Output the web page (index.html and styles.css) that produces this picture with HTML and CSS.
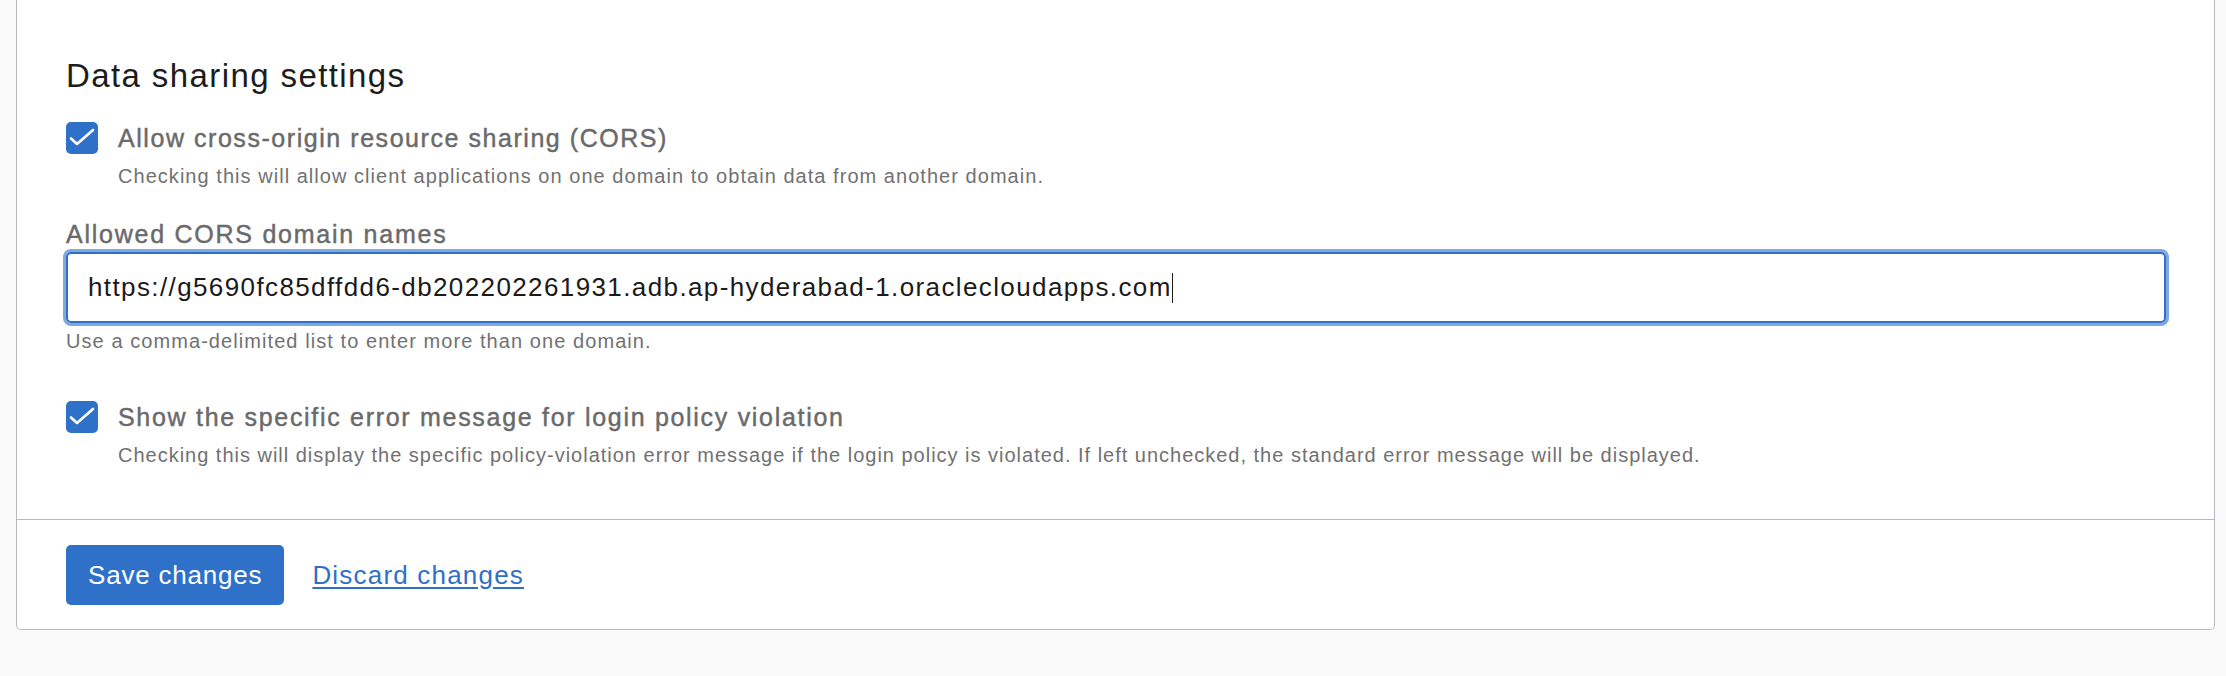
FILE: index.html
```html
<!DOCTYPE html>
<html lang="en">
<head>
<meta charset="utf-8">
<title>Data sharing settings</title>
<link rel="stylesheet" href="styles.css">
</head>
<body>
<div class="panel">
  <div class="panel-body">
    <h2 class="heading">Data sharing settings</h2>

    <div class="check-row">
      <span class="checkbox"><svg viewBox="0 0 32 32" width="32" height="32"><polyline points="5,16.5 11,22 27,8" fill="none" stroke="#fff" stroke-width="2.6" stroke-linecap="round" stroke-linejoin="round"/></svg></span>
      <span class="check-label">Allow cross-origin resource sharing (CORS)</span>
    </div>
    <div class="check-desc">Checking this will allow client applications on one domain to obtain data from another domain.</div>

    <div class="field-label">Allowed CORS domain names</div>
    <div class="input">https://g5690fc85dffdd6-db202202261931.adb.ap-hyderabad-1.oraclecloudapps.com<span class="caret"></span></div>
    <div class="help">Use a comma-delimited list to enter more than one domain.</div>

    <div class="check-row second">
      <span class="checkbox"><svg viewBox="0 0 32 32" width="32" height="32"><polyline points="5,16.5 11,22 27,8" fill="none" stroke="#fff" stroke-width="2.6" stroke-linecap="round" stroke-linejoin="round"/></svg></span>
      <span class="check-label wide">Show the specific error message for login policy violation</span>
    </div>
    <div class="check-desc tight">Checking this will display the specific policy-violation error message if the login policy is violated. If left unchecked, the standard error message will be displayed.</div>
  </div>
  <div class="panel-footer">
    <button class="btn-primary">Save changes</button>
    <a class="link" href="#">Discard changes</a>
  </div>
</div>
</body>
</html>
```

FILE: styles.css
```css
html, body {
  margin: 0;
  padding: 0;
  background: #fafafa;
  font-family: "Liberation Sans", Arial, sans-serif;
}

.panel {
  margin-left: 16px;
  width: 2197px;
  background: #ffffff;
  border: 1px solid #b7babe;
  border-top: none;
  border-radius: 0 0 5px 5px;
}

.panel-body {
  padding: 56px 48px 52px 49px;
}

.heading {
  margin: 0;
  font-size: 33px;
  line-height: 40px;
  font-weight: 400;
  color: #1d1c1a;
  letter-spacing: 1.4px;
}

.check-row {
  display: flex;
  align-items: center;
  height: 32px;
  margin-top: 26px;
}

.check-row.second {
  margin-top: 48px;
}

.checkbox {
  width: 32px;
  height: 32px;
  border-radius: 5px;
  background: #2f71c9;
  flex: none;
  display: flex;
}

.check-label {
  margin-left: 20px;
  font-size: 25px;
  line-height: 32px;
  color: #6a6a6a;
  -webkit-text-stroke: 0.45px #6a6a6a;
  letter-spacing: 1.55px;
}

.check-label.wide {
  letter-spacing: 1.7px;
}

.check-desc {
  margin-left: 52px;
  margin-top: 10px;
  font-size: 20px;
  line-height: 24px;
  color: #717171;
  letter-spacing: 1.04px;
}

.check-desc.tight {
  letter-spacing: 0.99px;
}

.field-label {
  margin-top: 31px;
  font-size: 25px;
  line-height: 30px;
  color: #6a6a6a;
  -webkit-text-stroke: 0.45px #6a6a6a;
  letter-spacing: 1.75px;
}

.input {
  margin-top: 3px;
  box-sizing: border-box;
  height: 71px;
  border: 2px solid #2f6fc7;
  border-radius: 5px;
  box-shadow: 0 0 0 3px #7fa7e0;
  padding: 0 20px;
  display: flex;
  align-items: center;
  font-size: 26px;
  color: #1b1a19;
  letter-spacing: 1.39px;
  white-space: nowrap;
}

.caret {
  display: inline-block;
  width: 1.5px;
  height: 30px;
  background: #1b1a19;
}

.help {
  margin-top: 6px;
  font-size: 20px;
  line-height: 24px;
  color: #717171;
  letter-spacing: 1.07px;
}

.panel-footer {
  border-top: 1px solid #b7babe;
  padding: 25px 49px 24px;
  display: flex;
  align-items: center;
  gap: 28px;
}

.btn-primary {
  height: 60px;
  padding: 0 22px;
  border: none;
  border-radius: 5px;
  background: #2f71c9;
  color: #ffffff;
  font-family: "Liberation Sans", Arial, sans-serif;
  font-size: 26px;
  letter-spacing: 0.8px;
  cursor: pointer;
}

.link {
  font-size: 26px;
  color: #2f6fc7;
  text-decoration: underline;
  text-underline-offset: 3px;
  letter-spacing: 1.2px;
}
```
